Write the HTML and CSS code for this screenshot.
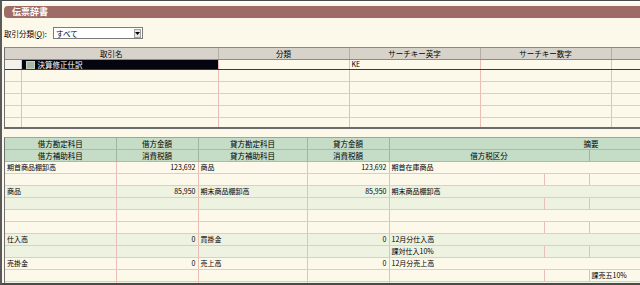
FILE: index.html
```html
<!DOCTYPE html>
<html lang="ja">
<head>
  <meta charset="UTF-8" />
  <title>伝票辞書</title>
  <link rel="stylesheet" href="styles.css">
</head>
<body>
  <div class="window">
    <div class="titlebar">伝票辞書</div>

    <div class="filter-row">
      <span class="filter-label">取引分類(<u>Q</u>):</span>
      <div class="select">
        <span>すべて</span>
        <span class="select-btn"><svg width="5" height="3" viewBox="0 0 5 3"><path d="M0 0H5L2.5 3Z" fill="#000"/></svg></span>
      </div>
    </div>

    <div class="grid top-grid">
      <table>
        <colgroup>
          <col style="width:16px"><col style="width:197px"><col style="width:131px"><col style="width:131px"><col style="width:131px"><col style="width:60px">
        </colgroup>
        <tr class="head">
          <th colspan="2">取引名</th><th>分類</th><th>サーチキー英字</th><th>サーチキー数字</th><th></th>
        </tr>
        <tr class="selected">
          <td class="rowhead"></td>
          <td class="name"><span class="doc-icon"></span>決算修正仕訳</td>
          <td></td><td>KE</td><td></td><td></td>
        </tr>
        <tr><td></td><td></td><td></td><td></td><td></td><td></td></tr>
        <tr><td></td><td></td><td></td><td></td><td></td><td></td></tr>
        <tr><td></td><td></td><td></td><td></td><td></td><td></td></tr>
        <tr><td></td><td></td><td></td><td></td><td></td><td></td></tr>
        <tr><td></td><td></td><td></td><td></td><td></td><td></td></tr>
      </table>
    </div>

    <div class="grid journal-grid">
      <table>
        <colgroup>
          <col style="width:111px"><col style="width:82px"><col style="width:109px"><col style="width:82px"><col style="width:155px"><col style="width:45px"><col style="width:204px">
        </colgroup>
        <tr class="head">
          <th>借方勘定科目</th><th>借方金額</th><th>貸方勘定科目</th><th>貸方金額</th><th colspan="3">摘要</th>
        </tr>
        <tr class="head">
          <th>借方補助科目</th><th>消費税額</th><th>貸方補助科目</th><th>消費税額</th><th colspan="2">借方税区分</th><th></th>
        </tr>

        <tr class="odd"><td>期首商品棚卸高</td><td class="num">123,692</td><td>商品</td><td class="num">123,692</td><td colspan="3">期首在庫商品</td></tr>
        <tr class="odd"><td></td><td></td><td></td><td></td><td></td><td></td><td></td></tr>

        <tr class="even"><td>商品</td><td class="num">85,950</td><td>期末商品棚卸高</td><td class="num">85,950</td><td colspan="3">期末商品棚卸高</td></tr>
        <tr class="even"><td></td><td></td><td></td><td></td><td></td><td></td><td></td></tr>

        <tr class="odd"><td></td><td></td><td></td><td></td><td colspan="3"></td></tr>
        <tr class="odd"><td></td><td></td><td></td><td></td><td></td><td></td><td></td></tr>

        <tr class="even"><td>仕入高</td><td class="num">0</td><td>買掛金</td><td class="num">0</td><td colspan="3">12月分仕入高</td></tr>
        <tr class="even"><td></td><td></td><td></td><td></td><td>課対仕入10%</td><td></td><td></td></tr>

        <tr class="odd"><td>売掛金</td><td class="num">0</td><td>売上高</td><td class="num">0</td><td colspan="3">12月分売上高</td></tr>
        <tr class="odd"><td></td><td></td><td></td><td></td><td></td><td></td><td>課売五10%</td></tr>

        <tr class="even"><td></td><td></td><td></td><td></td><td colspan="3"></td></tr>
      </table>
    </div>
  </div>
</body>
</html>
```

FILE: styles.css
```css
body {
  margin: 0;
  width: 640px;
  height: 285px;
  overflow: hidden;
  background: #fdf9ea;
  font-family: "Noto Sans CJK JP", "Noto Sans", sans-serif;
  color: #000;
}
.window {
  box-sizing: border-box;
  height: 285px;
  border-top: 1px solid #4a4a4a;
  border-left: 2px solid #5a5a5a;
  border-bottom: 2px solid #4a4a4a;
  box-shadow: inset 0 2px 0 #fff;
  padding: 5px 0 0 2px;
  overflow: hidden;
}
.titlebar {
  height: 12px;
  line-height: 12px;
  background: #9e6b66;
  color: #fff;
  font-size: 9px;
  font-weight: bold;
  padding-left: 8px;
  border-radius: 4px 0 0 4px;
}
.filter-row {
  display: flex;
  align-items: center;
  gap: 4px;
  height: 12px;
  margin: 9px 0 8px;
}
.filter-label {
  font-size: 7.5px;
  width: 45px;
}
.select {
  box-sizing: border-box;
  width: 90px;
  height: 12px;
  background: #fff;
  border: 1px solid #7c7c7c;
  display: flex;
  justify-content: space-between;
  align-items: center;
  font-size: 7.5px;
  padding-left: 2px;
}
.select-btn {
  box-sizing: border-box;
  width: 7px;
  height: 9px;
  margin-right: 1px;
  background: #e8e6e0;
  border: 1px solid #a0a0a0;
  display: flex;
  align-items: center;
  justify-content: center;
}
.grid {
  overflow: hidden;
  border-left: 1px solid #707070;
}
.grid table {
  border-collapse: collapse;
  table-layout: fixed;
}
.grid th,
.grid td {
  height: 11px;
  padding: 0 2px;
  line-height: 11px;
  white-space: nowrap;
  overflow: hidden;
  text-align: left;
  font-weight: normal;
}
.grid td {
  font-size: 7px;
  border-right: 1px solid #e8bdb4;
  border-bottom: 1px solid #d9d1bf;
}
.grid th {
  font-size: 7.5px;
  text-align: center;
}

.top-grid {
  height: 79px;
  border-top: 1px solid #8a8a8a;
  border-bottom: 2px solid #6a6a6a;
}
.top-grid table {
  width: 666px;
}
.top-grid .head th {
  background: #d7d3ca;
  border-right: 1px solid #b5aea5;
  border-bottom: 1px solid #8a8a8a;
}
.top-grid .selected td {
  height: 9px;
  line-height: 9px;
  border-bottom: 1px solid #3a3a3a;
}
.top-grid .rowhead {
  background: #f3f1ec;
}
.top-grid .selected .name {
  background: #050510;
  color: #fff;
  font-size: 7.5px;
}
.doc-icon {
  display: inline-block;
  vertical-align: -1px;
  width: 7px;
  height: 6px;
  margin: 0 3px 0 2px;
  background: #aab9a3;
  border: 1px solid #c9d3c4;
}

.journal-grid {
  margin-top: 8px;
  height: 149px;
  border-top: 1px solid #9aa89a;
}
.journal-grid table {
  width: 788px;
}
.journal-grid .head th {
  background: #c5dcc6;
  border-right: 1px solid #9fb4a0;
  border-bottom: 1px solid #a9bca9;
}
.journal-grid .odd td {
  background: #fdf9ea;
}
.journal-grid .even td {
  background: #eef2e1;
}
.journal-grid .num {
  text-align: right;
}
```
